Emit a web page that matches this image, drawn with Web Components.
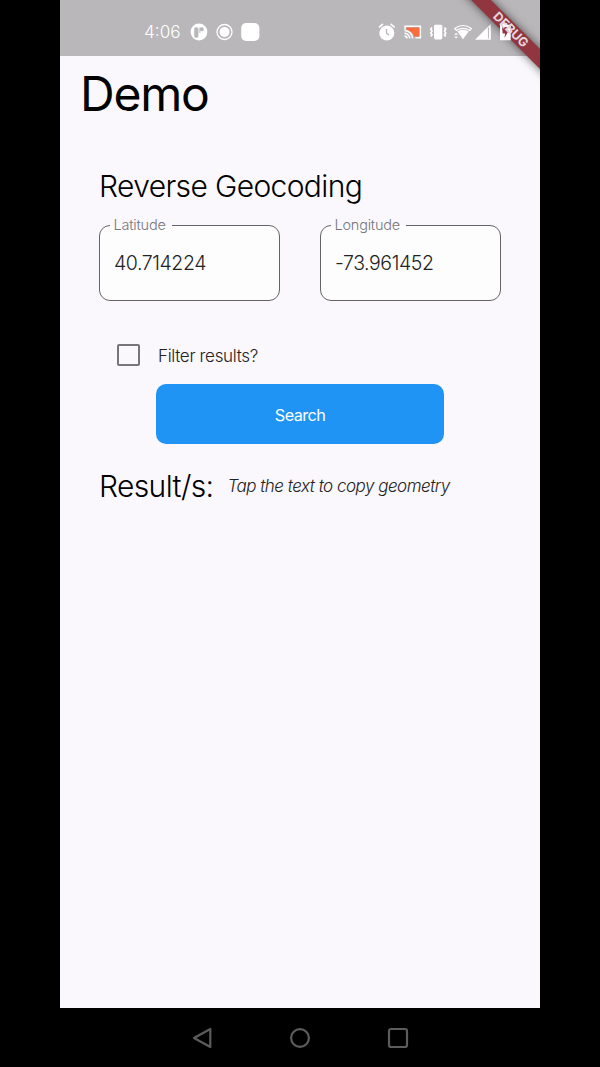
<!DOCTYPE html>
<html lang="en"><head><meta charset="utf-8"><title>Demo</title>
<style>html,body{margin:0;background:#000;height:1067px;overflow:hidden}body{font-family:Inter,"Liberation Sans",sans-serif;font-weight:300}</style></head>
<body><demo-app></demo-app>
<script>
const define=(name,html)=>customElements.define(name,class extends HTMLElement{
  constructor(){super();const t=document.createElement('template');t.innerHTML=html;this.attachShadow({mode:'open'}).append(t.content.cloneNode(true));}
});

define('status-bar',`<style>
:host{display:flex;height:56px;background:#b9b7ba;color:#fff;align-items:center;box-sizing:border-box;padding:8px 28px 0 84px}
time{font-size:17.2px;line-height:24px;width:46px}
svg{display:block;flex:none}.gap{flex:1}
</style><time>4:06</time>
<svg width="72" height="22" viewBox="190 21 72 22"><circle cx="199" cy="32" r="8.4" fill="#fff"/><rect x="194.2" y="27.2" width="4.2" height="10.5" rx="1.6" fill="#b9b7ba"/><path d="M199.4 27.4h1v5.600h-1z" fill="#b9b7ba"/><circle cx="201.8" cy="29.3" r="2" fill="#b9b7ba"/><circle cx="224.5" cy="32" r="7.5" fill="none" stroke="#fff" stroke-width="1.3"/><circle cx="224.5" cy="32" r="5" fill="#fff"/><rect x="241.2" y="23" width="18.2" height="18" rx="5" fill="#fff"/></svg>
<span class="gap"></span>
<svg width="136" height="22" viewBox="376 21 136 22" fill="#fff"><circle cx="386.8" cy="33" r="7.5"/><path d="M379 27.3l4-3.5M394.6 27.3l-4-3.5" stroke="#fff" stroke-width="1.7"/><path d="M386.500 29v4.200l2.500 2" fill="none" stroke="#b9b7ba" stroke-width="1.300"/>
<path d="M406.500 27.500h13v9h-5.500q-1-5-7.500-7z" fill="#ff6b3a"/><path d="M405 29.500v-3.200h15.400v11.500h-5" fill="none" stroke="#fff" stroke-width="1.500"/><path d="M404.500 30.500a8 8 0 0 1 8 8M404.500 33.300a5.200 5.200 0 0 1 5.200 5.200M404.500 36a2.500 2.500 0 0 1 2.500 2.500" fill="none" stroke="#fff" stroke-width="1.500"/>
<rect x="434" y="24.700" width="8.300" height="14.800" rx="1.400"/><path d="M432 27.500l-1.200 1.800 1.200 1.800-1.200 1.800 1.200 1.800-1.200 1.800M444.500 27.500l1.200 1.800-1.200 1.800 1.200 1.800-1.200 1.800 1.200 1.800" fill="none" stroke="#fff" stroke-width="1.700"/>
<path d="M454.800 28.500Q463 22.500 471.400 28.500l-1.700 2q-6.700-4.200-13.200 0z" fill="none" stroke="#fff" stroke-width="1.200"/><path d="M457.300 31.600q5.700-3.500 11.400 0L463 39.200z"/><path d="M454.300 34.800l1.800-2 1.800 2zM454.300 36.400l1.800 2 1.800-2z"/>
<path d="M475 39.800L490.800 24v15.800z"/><path d="M488.400 27.500v11" stroke="#b9b7ba" stroke-width="1"/></svg>`);

define('debug-banner',`<style>:host{position:absolute;right:0;top:0;width:90px;height:90px;overflow:hidden;pointer-events:none}
div{position:absolute;left:1px;top:22.500px;width:120px;height:14px;background:#91353f;transform:rotate(45deg);box-shadow:0 0 10px #0009}
b{position:absolute;left:1px;top:21.500px;width:120px;transform:rotate(45deg);color:#e6d6dc;font:700 12.600px/15px Inter,sans-serif;text-align:center}
svg{position:absolute;left:50px;top:23px}</style><div></div><svg width="11" height="18"><path d="M0 1.800h2.200V.2h5v1.600h3.500v15.400H0z" fill="#fff"/><path d="M2 4l6.500 0-2 3.500h2.200L4.500 15l.6-4.500H2.700z" fill="#91353f"/></svg><b>DEBUG</b>`);

define('page-title',`<style>:host{display:block;font-size:48px;line-height:60px;font-weight:400;color:#000;padding:8px 0 0 20px;height:60px;letter-spacing:-1.2px}</style><slot></slot>`);
define('section-title',`<style>:host{display:block;font-size:30px;line-height:40px;color:#000;white-space:nowrap;letter-spacing:-.63px}</style><slot></slot>`);
define('outlined-field',`<style>:host{display:block;width:181px}
fieldset{margin:0;min-width:0;border:0;padding:0;height:76px;position:relative}
.box{box-sizing:border-box;height:76px;border:1px solid #666467;border-radius:11px;background:#fefdfe;padding:24px 0 0 14px;font-size:19.500px;line-height:26px;color:#222;letter-spacing:-.42px}
.label{position:absolute;left:11px;top:-9px;padding:0 6px 0 3.500px;background:linear-gradient(#faf8fc 10px,#fefdfe 10px);font-size:14.500px;line-height:18px;color:#77757a;white-space:nowrap;letter-spacing:-.22px}
</style><fieldset><div class="box"><slot></slot></div><div class="label"><slot name="label"></slot></div></fieldset>`);
define('check-row',`<style>:host{display:flex;align-items:center;gap:18px;font-size:17px;line-height:24px;color:#222;letter-spacing:-.33px}
i{box-sizing:border-box;width:23px;height:22px;border:2px solid #777578;border-radius:2px}
span{margin-top:1px}</style><i></i><span><slot></slot></span>`);
define('search-button',`<style>:host{display:block;width:288px;height:60px;border-radius:10px;background:#2094f4;color:#fff;font-size:16.300px;line-height:62px;text-align:center;font-weight:400;letter-spacing:-.6px}</style><slot></slot>`);
define('result-row',`<style>:host{display:flex;align-items:center;height:40px}
em{font-size:17px;line-height:24px;color:#222;margin-left:13.500px;white-space:nowrap;letter-spacing:-.5px}
section-title{width:115px}</style><section-title><slot name="title"></slot></section-title><em><slot></slot></em>`);
define('nav-bar',`<style>:host{display:flex;height:59px;background:#000;justify-content:space-between;align-items:center;padding:0 131px;box-sizing:border-box}
svg{fill:none;stroke:#5d5b5e;stroke-width:2.200;stroke-linejoin:round}</style>
<svg width="22" height="22"><path d="M3 11L19.300 2v18z"/></svg><svg width="22" height="22"><circle cx="11" cy="11" r="8.900"/></svg><svg width="22" height="22"><rect x="2" y="2" width="18" height="18" rx="2"/></svg>`);

define('demo-app',`<style>
:host{display:flex;flex-direction:column;position:relative;width:480px;height:1067px;margin:0 auto;background:#faf8fc;overflow:hidden}
main{flex:1;display:flex;flex-direction:column}
.body{padding:42px 39px 0}.fields{display:flex;justify-content:space-between;width:402px;margin-top:19px}
check-row{margin:42px 0 0 18px;height:24px}search-button{margin:17px 0 0 57px}result-row{margin-top:22px}
</style><status-bar></status-bar><main><page-title>Demo</page-title><div class="body"><section-title>Reverse Geocoding</section-title>
<div class="fields"><outlined-field><span slot="label">Latitude</span>40.714224</outlined-field><outlined-field><span slot="label">Longitude</span>-73.961452</outlined-field></div>
<check-row>Filter results?</check-row><search-button>Search</search-button><result-row><span slot="title">Result/s:</span>Tap the text to copy geometry</result-row></div></main><nav-bar></nav-bar><debug-banner></debug-banner>`);
</script></body></html>
